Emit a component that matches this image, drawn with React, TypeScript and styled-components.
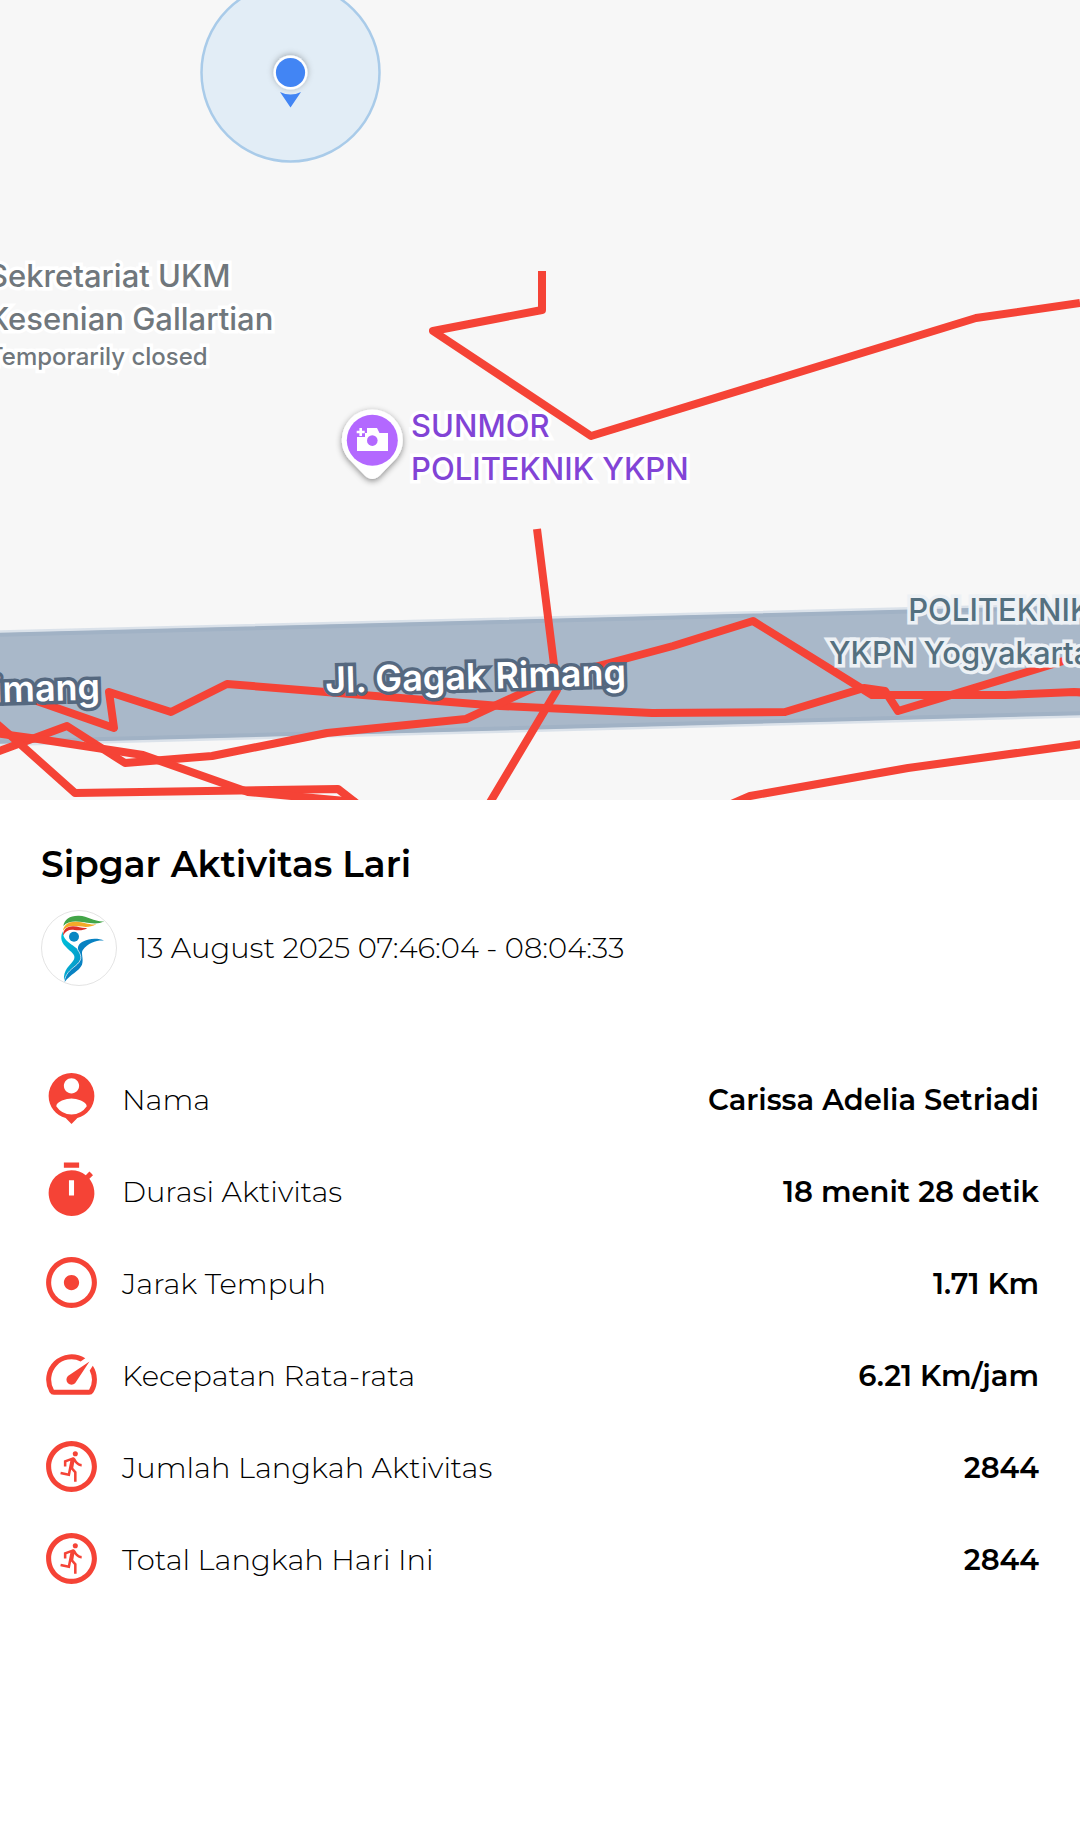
import React from "react";
import styled, { createGlobalStyle } from "styled-components";
import {
  MdAdjust,
  MdOutlineRunCircle,
  MdPersonPin,
  MdSpeed,
  MdTimer,
} from "react-icons/md";

const MAP_W = 1080;
const MAP_H = 800;

const GlobalStyle = createGlobalStyle`
  body {
    margin: 0;
    background: #ffffff;
  }
`;

const Page = styled.main`
  min-height: 100vh;
  background: #ffffff;
  color: #000000;
  font-family: Montserrat, Inter, "Open Sans", sans-serif;
`;

const MapArea = styled.section`
  position: relative;
  aspect-ratio: 27 / 20;
  overflow: hidden;
  background: #f7f7f7;
`;

const MapDrawing = styled.svg`
  display: block;
  width: 100%;
  height: 100%;
`;

const tones = {
  closed: { ink: "#70777c", halo: "#ffffff" },
  sight: { ink: "#8244d6", halo: "#ffffff" },
  school: { ink: "#54707f", halo: "#edf1f5" },
  road: { ink: "#ffffff", halo: "#55687f" },
};

const MapLabel = styled.div<{ $x: number; $y: number; $tone: keyof typeof tones }>`
  position: absolute;
  left: ${(p) => (p.$x / MAP_W) * 100}%;
  top: ${(p) => (p.$y / MAP_H) * 100}%;
  color: ${(p) => tones[p.$tone].ink};
  font-family: Inter, Roboto, sans-serif;
  font-size: 31px;
  line-height: 43px;
  font-weight: 500;
  text-align: ${(p) => (p.$tone === "school" ? "right" : "left")};
  white-space: nowrap;
  -webkit-text-stroke: 7px ${(p) => tones[p.$tone].halo};
  paint-order: stroke fill;
`;

const RoadLabel = styled(MapLabel)`
  font-weight: 600;
  font-size: 36px;
  transform: rotate(-1.5deg);
`;

const LabelNote = styled.div`
  font-size: 24px;
  line-height: 34px;
`;

const Summary = styled.section`
  padding: 40px 41px;
`;

const Title = styled.h1`
  margin: 0;
  font-size: 36px;
  line-height: 48px;
  font-weight: 600;
`;

const Session = styled.div`
  display: flex;
  align-items: center;
  gap: 20px;
  margin-top: 22px;
`;

const Avatar = styled.svg`
  flex: none;
  width: 76px;
  height: 76px;
`;

const SessionTime = styled.time`
  font-size: 29px;
  line-height: 36px;
  font-weight: 300;
`;

const Stats = styled.dl`
  display: grid;
  gap: 30px;
  margin: 83px 0 0;
`;

const StatRow = styled.div`
  display: flex;
  align-items: center;
  height: 62px;
`;

const StatLabel = styled.dt`
  display: flex;
  align-items: center;
  gap: 20px;
  font-size: 29px;
  line-height: 36px;
  font-weight: 300;

  svg {
    flex: none;
    width: 61px;
    height: 61px;
    margin-bottom: 4px;
    color: #f54336;
  }
`;

const StatValue = styled.dd`
  margin: 0 0 0 auto;
  font-size: 29px;
  line-height: 36px;
  font-weight: 600;
  text-align: right;
`;

const routes = [
  "542,271 542,310 433,331 591,436 976,318 1080,303",
  "537,529 554,665 557,690 489,804",
  "8,691 114,728 109,692 171,712 227,684 500,706 652,713 785,712 864,688 885,691 898,711 1060,662 1090,653",
  "-6,753 67,726 125,763 212,756 327,733 466,719 557,677 673,646 753,621 872,695 1005,695 1074,692 1090,693",
  "-4,723 19,743 75,793 338,789 360,806",
  "-6,733 38,739 143,755 248,792 356,802",
  "722,808 750,796 908,768 1090,743",
];

const stats = [
  { icon: <MdPersonPin />, label: "Nama", value: "Carissa Adelia Setriadi" },
  { icon: <MdTimer />, label: "Durasi Aktivitas", value: "18 menit 28 detik" },
  { icon: <MdAdjust />, label: "Jarak Tempuh", value: "1.71 Km" },
  { icon: <MdSpeed />, label: "Kecepatan Rata-rata", value: "6.21 Km/jam" },
  { icon: <MdOutlineRunCircle />, label: "Jumlah Langkah Aktivitas", value: "2844" },
  { icon: <MdOutlineRunCircle />, label: "Total Langkah Hari Ini", value: "2844" },
];

function RouteMap() {
  return (
    <MapArea aria-label="Peta rute">
      <MapDrawing viewBox={`0 0 ${MAP_W} ${MAP_H}`} aria-hidden="true">
        <defs>
          <filter id="soft" x="-40%" y="-40%" width="180%" height="180%">
            <feDropShadow dx="0" dy="2" stdDeviation="3" floodColor="#000" floodOpacity="0.45" />
          </filter>
          <filter id="dotShadow" x="-60%" y="-60%" width="220%" height="220%">
            <feDropShadow dx="0" dy="-1" stdDeviation="3" floodColor="#000" floodOpacity="0.3" />
          </filter>
        </defs>

        <path d="M-5 632L1085 604V716L-5 745Z" fill="#a9b8c9" stroke="#dbe2ea" strokeWidth="3" />
        <path d="M-5 635L1085 607M-5 742L1085 713" stroke="#a1b2c5" strokeWidth="4" fill="none" />

        <circle cx="290.500" cy="72.500" r="89" fill="#e2edf6" stroke="#a9cbe9" strokeWidth="2.5" />
        <circle cx="290.500" cy="72.500" r="17" fill="#fff" filter="url(#dotShadow)" />
        <circle cx="290.500" cy="72.500" r="14.6" fill="#4285f4" />
        <path d="M280 92Q290.500 97 301 92L290.500 107.500Z" fill="#4285f4" />

        <g fill="none" stroke="#f54336" strokeWidth="8" strokeLinejoin="round">
          {routes.map((points) => (
            <polyline key={points} points={points} />
          ))}
        </g>

        <path
          d="M372.300 409.500a30.500 30.500 0 0 1 30.500 30.500c0 9-3.500 15.500-9 21l-14 14.500c-4.500 4.500-10.500 4.500-15 0l-14-14.500c-5.500-5.500-9-12-9-21a30.500 30.500 0 0 1 30.500-30.500Z"
          fill="#fff"
          filter="url(#soft)"
        />
        <circle cx="372.300" cy="440.300" r="25.500" fill="#b368ff" />
        <path d="M357 437V451H388V433H379.500L377 428H367V433H365V437Z" fill="#fff" />
        <path d="M360.700 428V436M356.700 432H364.700" stroke="#fff" strokeWidth="2.600" />
        <circle cx="372.300" cy="440.600" r="5.300" fill="#b368ff" />
      </MapDrawing>

      <MapLabel $x={-12} $y={254} $tone="closed">
        Sekretariat UKM
        <br />
        Kesenian Gallartian
        <LabelNote>Temporarily closed</LabelNote>
      </MapLabel>
      <MapLabel $x={411} $y={404} $tone="sight">
        SUNMOR
        <br />
        POLITEKNIK YKPN
      </MapLabel>
      <MapLabel $x={829} $y={588} $tone="school">
        POLITEKNIK
        <br />
        YKPN Yogyakarta
      </MapLabel>
      <RoadLabel $x={325} $y={655} $tone="road">
        Jl. Gagak Rimang
      </RoadLabel>
      <RoadLabel $x={-7} $y={667} $tone="road">
        imang
      </RoadLabel>
    </MapArea>
  );
}

function ClubLogo() {
  return (
    <Avatar viewBox="18 30 228 228" role="img" aria-label="Sipgar">
      <defs>
        <linearGradient id="arm" x1="0" y1="0" x2="1" y2="1">
          <stop offset="0" stopColor="#00c4dc" />
          <stop offset="1" stopColor="#078fc4" />
        </linearGradient>
      </defs>
      <circle cx="132" cy="144" r="112.500" fill="#fff" stroke="#d4d4d4" strokeWidth="2" />
      <path d="M85 78C88 58 105 46 132 47C160 48 178 66 208 64C188 74 170 70 148 67C122 63 100 62 85 78Z" fill="#43a548" />
      <path d="M84 92C86 74 102 64 124 65C148 66 160 75 184 73C166 83 148 81 130 79C110 76 94 77 84 92Z" fill="#f4aa28" />
      <path d="M84 107C84 90 94 79 114 79C132 79 140 86 157 84C144 93 130 91 118 90C101 88 92 94 84 107Z" fill="#dc3029" />
      <circle cx="117" cy="110" r="15" fill="#0786c3" />
      <path d="M83 94C74 116 80 130 98 146C114 160 123 166 116 180C106 198 84 206 87 243C92 226 104 212 120 198C140 182 142 166 130 150C116 134 84 126 83 94Z" fill="url(#arm)" />
      <path d="M208 122C188 120 160 126 143 151C137 160 147 177 141 194C132 214 106 222 89 246C87 224 108 208 122 196C139 181 140 168 130 150C126 141 132 130 146 124C162 115 188 113 208 122Z" fill="#0882c2" />
      <path d="M127 148C144 170 139 183 122 197C104 211 92 222 88 243" fill="none" stroke="#fff" strokeWidth="2" />
    </Avatar>
  );
}

export default function App() {
  return (
    <Page>
      <GlobalStyle />
      <RouteMap />
      <Summary>
        <Title>Sipgar Aktivitas Lari</Title>
        <Session>
          <ClubLogo />
          <SessionTime>13 August 2025 07:46:04 - 08:04:33</SessionTime>
        </Session>
        <Stats>
          {stats.map((stat) => (
            <StatRow key={stat.label}>
              <StatLabel>
                {stat.icon}
                {stat.label}
              </StatLabel>
              <StatValue>{stat.value}</StatValue>
            </StatRow>
          ))}
        </Stats>
      </Summary>
    </Page>
  );
}
